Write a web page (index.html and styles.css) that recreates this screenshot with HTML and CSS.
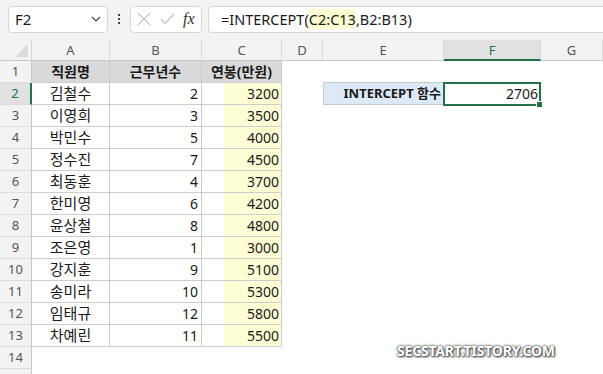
FILE: index.html
```html
<!DOCTYPE html>
<html lang="ko">
<head>
    <meta charset="UTF-8">
    <title>INTERCEPT 함수</title>
    <link rel="stylesheet" href="styles.css">
</head>
<body>

    <div class="topbar">
        <div class="namebox">
            <span>F2</span>
            <svg class="chevron" width="10" height="6" viewBox="0 0 10 6"><path d="M1 1 L5 5 L9 1" fill="none" stroke="#444" stroke-width="1.2"/></svg>
        </div>
        <div class="dots"><i></i><i></i><i></i></div>
        <div class="fxbox">
            <svg width="14" height="14" viewBox="0 0 14 14"><path d="M1 1 L13 13 M13 1 L1 13" stroke="#c4c4c4" stroke-width="1.2"/></svg>
            <svg width="15" height="12" viewBox="0 0 15 12"><path d="M1 6 L5 10.5 L14 1" fill="none" stroke="#c4c4c4" stroke-width="1.2"/></svg>
            <span class="fx">fx</span>
        </div>
        <div class="formula">=INTERCEPT(<span class="ref">C2:C13</span>,B2:B13)</div>
    </div>

    <div class="sheet">
        <div class="corner"><div class="tri"></div></div>
        <div class="colhead">A</div>
        <div class="colhead">B</div>
        <div class="colhead">C</div>
        <div class="colhead">D</div>
        <div class="colhead">E</div>
        <div class="colhead active">F</div>
        <div class="colhead">G</div>

        <div class="rowhead">1</div>
        <div class="cell title">직원명</div>
        <div class="cell title">근무년수</div>
        <div class="cell title">연봉(만원)</div>
        <div></div><div></div><div></div><div></div>

        <div class="rowhead active">2</div>
        <div class="cell name">김철수</div>
        <div class="cell num">2</div>
        <div class="cell pay"><span>3200</span></div>
        <div></div>
        <div class="label">INTERCEPT 함수</div>
        <div class="result">2706<i class="handle"></i></div>
        <div></div>

        <div class="rowhead">3</div>
        <div class="cell name">이영희</div>
        <div class="cell num">3</div>
        <div class="cell pay"><span>3500</span></div>
        <div></div><div></div><div></div><div></div>

        <div class="rowhead">4</div>
        <div class="cell name">박민수</div>
        <div class="cell num">5</div>
        <div class="cell pay"><span>4000</span></div>
        <div></div><div></div><div></div><div></div>

        <div class="rowhead">5</div>
        <div class="cell name">정수진</div>
        <div class="cell num">7</div>
        <div class="cell pay"><span>4500</span></div>
        <div></div><div></div><div></div><div></div>

        <div class="rowhead">6</div>
        <div class="cell name">최동훈</div>
        <div class="cell num">4</div>
        <div class="cell pay"><span>3700</span></div>
        <div></div><div></div><div></div><div></div>

        <div class="rowhead">7</div>
        <div class="cell name">한미영</div>
        <div class="cell num">6</div>
        <div class="cell pay"><span>4200</span></div>
        <div></div><div></div><div></div><div></div>

        <div class="rowhead">8</div>
        <div class="cell name">윤상철</div>
        <div class="cell num">8</div>
        <div class="cell pay"><span>4800</span></div>
        <div></div><div></div><div></div><div></div>

        <div class="rowhead">9</div>
        <div class="cell name">조은영</div>
        <div class="cell num">1</div>
        <div class="cell pay"><span>3000</span></div>
        <div></div><div></div><div></div><div></div>

        <div class="rowhead">10</div>
        <div class="cell name">강지훈</div>
        <div class="cell num">9</div>
        <div class="cell pay"><span>5100</span></div>
        <div></div><div></div><div></div><div></div>

        <div class="rowhead">11</div>
        <div class="cell name">송미라</div>
        <div class="cell num">10</div>
        <div class="cell pay"><span>5300</span></div>
        <div></div><div></div><div></div><div></div>

        <div class="rowhead">12</div>
        <div class="cell name">임태규</div>
        <div class="cell num">12</div>
        <div class="cell pay"><span>5800</span></div>
        <div></div><div></div><div></div><div></div>

        <div class="rowhead">13</div>
        <div class="cell name">차예린</div>
        <div class="cell num">11</div>
        <div class="cell pay"><span>5500</span></div>
        <div></div><div></div><div></div><div></div>

        <div class="rowhead">14</div>
        <div></div><div></div><div></div><div></div><div></div><div></div><div></div>

        <div class="rowhead"></div>
    </div>

    <div class="watermark">SECSTART.TISTORY.COM</div>

</body>
</html>
```

FILE: styles.css
```css
body {
    margin: 0;
    background-color: #ffffff;
    font-family: 'Noto Sans', 'Noto Sans CJK KR', sans-serif;
    color: #1a1a1a;
    width: 603px;
    height: 374px;
    overflow: hidden;
    position: relative;
}

.topbar {
    display: flex;
    align-items: center;
    height: 40px;
    background-color: #f3f3f3;
    padding: 0 0 2px 8px;
    box-sizing: border-box;
}

.namebox {
    width: 100px;
    height: 27px;
    box-sizing: border-box;
    background-color: #fff;
    border: 1px solid #d6d6d6;
    border-radius: 4px;
    display: flex;
    align-items: center;
    justify-content: space-between;
    padding: 0 6px 0 6px;
    font-size: 15px;
}

.dots {
    width: 22px;
    display: flex;
    flex-direction: column;
    align-items: center;
    gap: 2px;
}

.dots i {
    width: 2px;
    height: 2px;
    background-color: #444;
}

.fxbox {
    width: 72px;
    height: 27px;
    box-sizing: border-box;
    background-color: #fff;
    border: 1px solid #d6d6d6;
    border-radius: 4px;
    display: flex;
    align-items: center;
    gap: 9px;
    padding-left: 6px;
}

.fx {
    font-family: 'Liberation Serif', serif;
    font-style: italic;
    font-size: 16px;
    color: #333;
    margin-left: -1px;
}

.formula {
    flex: 1;
    margin-left: 6px;
    height: 27px;
    box-sizing: border-box;
    background-color: #fff;
    border: 1px solid #d6d6d6;
    border-right: none;
    border-radius: 4px 0 0 4px;
    padding-left: 12px;
    font-size: 14.5px;
    line-height: 25px;
    white-space: nowrap;
}

.ref {
    background-color: #fefdd2;
}

.sheet {
    display: grid;
    grid-template-columns: 32px 78px 92px 80px 41px 121px 97px 62px;
    grid-template-rows: 21px repeat(15, 22px);
    font-size: 14px;
}

.corner {
    background-color: #f3f3f3;
    border-right: 1px solid #d4d4d4;
    border-bottom: 1px solid #c8c8c8;
    position: relative;
}

.tri {
    position: absolute;
    right: 3px;
    bottom: 3px;
    width: 0;
    height: 0;
    border-left: 13px solid transparent;
    border-bottom: 13px solid #dcdcdc;
}

.colhead {
    background-color: #f3f3f3;
    border-right: 1px solid #d9d9d9;
    border-bottom: 1px solid #c8c8c8;
    text-align: center;
    font-size: 13px;
    line-height: 20px;
    color: #555;
}

.colhead.active {
    background-color: #e1e1e1;
    color: #217346;
    border-bottom: 2px solid #217346;
}

.rowhead {
    background-color: #f3f3f3;
    border-right: 1px solid #c8c8c8;
    border-bottom: 1px solid #dcdcdc;
    text-align: center;
    font-size: 13px;
    line-height: 21px;
    color: #555;
}

.rowhead.active {
    background-color: #e1e1e1;
    border-right: 2px solid #217346;
    color: #217346;
}

.cell {
    border-right: 1px solid #cdcdcd;
    border-bottom: 1px solid #cdcdcd;
    line-height: 21px;
    white-space: nowrap;
}

.title {
    background-color: #d9d9d9;
    font-weight: bold;
    text-align: center;
}

.name {
    text-align: center;
    font-size: 15px;
}

.num {
    text-align: right;
    padding-right: 3px;
}

.pay {
    display: flex;
    justify-content: flex-end;
}

.pay span {
    width: 57px;
    background-color: #fefed6;
    text-align: right;
    padding-right: 2px;
    box-sizing: border-box;
}

.label {
    background-color: #dde9f6;
    border: 1px solid #c8c8c8;
    border-right: none;
    margin-top: -1px;
    font-weight: bold;
    font-size: 13px;
    text-align: right;
    padding-right: 3px;
    line-height: 21px;
    white-space: nowrap;
}

.result {
    border: 2px solid #217346;
    margin: -1px 0 -1px -1px;
    text-align: right;
    padding-right: 1px;
    line-height: 20px;
    position: relative;
}

.handle {
    position: absolute;
    right: -4px;
    bottom: -4px;
    width: 5px;
    height: 5px;
    background-color: #217346;
    border: 1px solid #fff;
}

.watermark {
    position: absolute;
    left: 397px;
    top: 341px;
    font-family: 'Noto Sans', sans-serif;
    font-weight: bold;
    font-size: 14px;
    letter-spacing: -0.2px;
    color: #ffffff;
    text-shadow: 0 0 2px #555, 0 0 3px #555, 1px 1px 2px #333;
}
```
